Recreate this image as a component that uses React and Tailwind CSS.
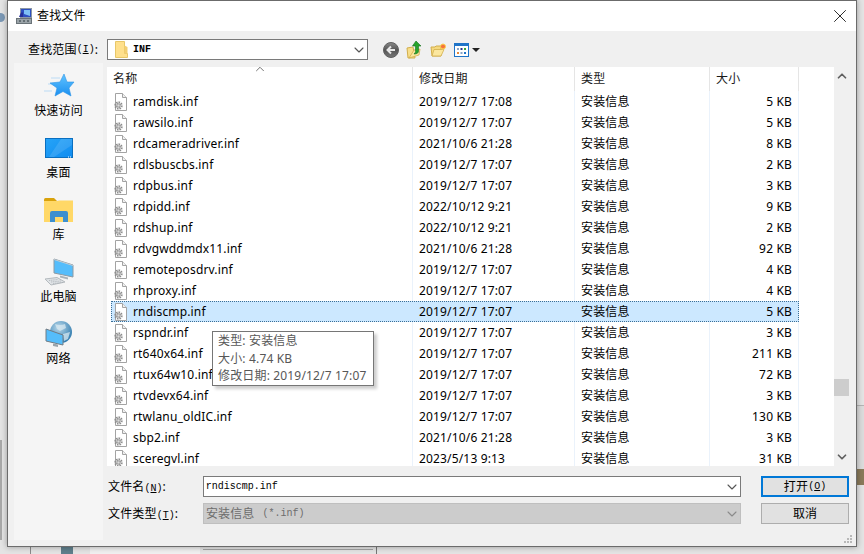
import { ChevronDown, ChevronUp, X } from "lucide-react";

const files = [
  ["ramdisk.inf", "2019/12/7 17:08", "5 KB"],
  ["rawsilo.inf", "2019/12/7 17:07", "5 KB"],
  ["rdcameradriver.inf", "2021/10/6 21:28", "8 KB"],
  ["rdlsbuscbs.inf", "2019/12/7 17:07", "2 KB"],
  ["rdpbus.inf", "2019/12/7 17:07", "3 KB"],
  ["rdpidd.inf", "2022/10/12 9:21", "9 KB"],
  ["rdshup.inf", "2022/10/12 9:21", "2 KB"],
  ["rdvgwddmdx11.inf", "2021/10/6 21:28", "92 KB"],
  ["remoteposdrv.inf", "2019/12/7 17:07", "4 KB"],
  ["rhproxy.inf", "2019/12/7 17:07", "4 KB"],
  ["rndiscmp.inf", "2019/12/7 17:07", "5 KB"],
  ["rspndr.inf", "2019/12/7 17:07", "3 KB"],
  ["rt640x64.inf", "2019/12/7 17:07", "211 KB"],
  ["rtux64w10.inf", "2019/12/7 17:07", "72 KB"],
  ["rtvdevx64.inf", "2019/12/7 17:07", "3 KB"],
  ["rtwlanu_oldIC.inf", "2019/12/7 17:07", "130 KB"],
  ["sbp2.inf", "2021/10/6 21:28", "3 KB"],
  ["sceregvl.inf", "2023/5/13 9:13", "31 KB"],
];

function FileIcon() {
  return (
    <svg width="14" height="18" viewBox="0 0 14 18" className="shrink-0">
      <path d="M2.5 .5H9.5L13.5 4.5V17.5H2.5Z" fill="#fff" stroke="#a3a3a3" />
      <path d="M9.5 .5V4.5H13.5" fill="#f0f0f0" stroke="#a3a3a3" />
      <circle cx="5.5" cy="12.5" r="3" fill="none" stroke="#8c8c8c" strokeWidth="2.4" strokeDasharray="1.4 .9" />
      <circle cx="5.5" cy="12.5" r="1.5" fill="#dcdcdc" stroke="#8c8c8c" strokeWidth=".8" />
    </svg>
  );
}

function FolderIcon() {
  return (
    <svg width="13" height="17" viewBox="0 0 13 17">
      <path d="M.5 .5H9.5V12.5H12.5V16.5H.5Z" fill="#ffe08c" stroke="#e8c768" />
      <path d="M9.5 4.5L12.5 6V12.5H9.5Z" fill="#f3cf72" />
    </svg>
  );
}

function StarIcon() {
  return (
    <svg width="32" height="26" viewBox="0 0 32 26">
      <defs>
        <linearGradient id="starFill" x1="0" y1="0" x2="0" y2="1">
          <stop offset="0" stopColor="#62c4ff" />
          <stop offset="1" stopColor="#1a8ff0" />
        </linearGradient>
      </defs>
      <path d="M8 5H17M5 11H12M1 18H9" stroke="#bcdcf5" strokeWidth="1.2" />
      <path d="M21 1L24 9L31 9L26 15L28 23L20 18.500L12 23L14 15L7 10L17 9Z" fill="url(#starFill)" stroke="#2a93e8" strokeWidth=".6" />
    </svg>
  );
}

function DesktopIcon() {
  return (
    <svg width="28" height="20" viewBox="0 0 28 20">
      <defs>
        <linearGradient id="deskFill" x1="0" y1="0" x2="1" y2="1">
          <stop offset="0" stopColor="#26a4f8" />
          <stop offset="1" stopColor="#0f8cf0" />
        </linearGradient>
      </defs>
      <rect x=".5" y=".5" width="27" height="19" fill="url(#deskFill)" stroke="#0a6fc0" />
      <path d="M16 1H27V7L9 19H4Z" fill="#fff" fillOpacity=".12" />
      <path d="M23 19H27" stroke="#fff" strokeDasharray="1 1" />
    </svg>
  );
}

function LibraryIcon() {
  return (
    <svg width="29" height="25" viewBox="0 0 29 25">
      <path d="M0 1.500Q0 0 1.500 0H10L13 3H0Z" fill="#d9a20c" />
      <path d="M0 3H13L15 2.500H29V24H0Z" fill="#ffd867" />
      <path d="M6 24V15Q6 13 8 13H22Q24 13 24 15V24H19V19H11V24Z" fill="#3c8fcf" />
    </svg>
  );
}

function ComputerIcon() {
  return (
    <svg width="32" height="28" viewBox="0 0 32 28">
      <path d="M11 1L30 7V19L11 15Z" fill="#55bdfb" stroke="#8e9aa3" />
      <path d="M11 1L30 7L30 8L11 2Z" fill="#c4ced4" />
      <path d="M17 17.500L25 19.500V21.500L17 19.500Z" fill="#aab3b9" />
      <path d="M2 21L14 19.500L22 24L8 27Z" fill="#dfe3e6" stroke="#b4babe" />
      <path d="M6 22.500L15 21.500M8 24L18 23M10 25.500L20 24.500" stroke="#a9afb4" strokeWidth=".7" strokeDasharray="1.200 .6" />
    </svg>
  );
}

function NetworkIcon() {
  return (
    <svg width="28" height="27" viewBox="0 0 28 27">
      <defs>
        <radialGradient id="globeFill" cx=".4" cy=".3" r=".8">
          <stop offset="0" stopColor="#b8d8ea" />
          <stop offset="1" stopColor="#1f6fa6" />
        </radialGradient>
      </defs>
      <circle cx="16" cy="11" r="11" fill="url(#globeFill)" />
      <path d="M10 3Q15 5 20 3L21 7L15 10L12 8ZM18 13L25 11L23 18L19 20Z" fill="#d8e8f0" fillOpacity=".75" />
      <path d="M1 8L18 14V24L1 20Z" fill="#55bdfb" stroke="#707c85" />
      <path d="M8 22.500L13 23.500V26L8 25Z" fill="#9aa4ab" />
    </svg>
  );
}

function BackIcon() {
  return (
    <svg width="16" height="16" viewBox="0 0 16 16">
      <defs>
        <linearGradient id="backFill" x1="0" y1="0" x2="0" y2="1">
          <stop offset="0" stopColor="#8a8a8a" />
          <stop offset=".5" stopColor="#555" />
          <stop offset="1" stopColor="#777" />
        </linearGradient>
      </defs>
      <circle cx="8" cy="8" r="7.500" fill="url(#backFill)" stroke="#5f5f5f" />
      <path d="M12 8H5M8 4.500L4.500 8L8 11.500" fill="none" stroke="#e8e8e8" strokeWidth="2" />
    </svg>
  );
}

function UpFolderIcon() {
  return (
    <svg width="16" height="18" viewBox="0 0 16 18">
      <path d="M1 7L7 6L9 17L2 17Z" fill="#f8df8a" stroke="#d2ae4c" />
      <path d="M3 17L13 14L14 8L8 9Z" fill="#fbe79f" stroke="#d2ae4c" strokeWidth=".8" />
      <path d="M10 0L15 5H12.500V10Q12.500 13 8 13Q10.500 11 9.500 9V5H6.500Z" fill="#27a32c" stroke="#14701c" strokeWidth=".6" />
    </svg>
  );
}

function NewFolderIcon() {
  return (
    <svg width="16" height="14" viewBox="0 0 16 14">
      <path d="M1 4H5L6 3H11V13H2Z" fill="#f5d97f" stroke="#d2ae4c" />
      <path d="M2 13L4 6.500H14L11 13Z" fill="#fbe79f" stroke="#d2ae4c" strokeWidth=".8" />
      <circle cx="13" cy="3.500" r="2.500" fill="#f6743a" stroke="#fbd24e" />
    </svg>
  );
}

function ViewIcon() {
  return (
    <svg width="15" height="14" viewBox="0 0 15 14">
      <rect x=".5" y=".5" width="14" height="13" fill="#fff" stroke="#1f74c8" />
      <rect x="1" y="1" width="13" height="2" fill="#1f74c8" />
      <rect x="3" y="5" width="2" height="2" fill="#8aa5c8" />
      <rect x="6.500" y="5" width="2" height="2" fill="#27348b" />
      <rect x="10" y="5" width="2" height="2" fill="#3aa53a" />
      <rect x="3" y="9" width="2" height="2" fill="#e58a3a" />
      <rect x="6.500" y="9" width="2" height="2" fill="#8aa5c8" />
      <rect x="10" y="9" width="2" height="2" fill="#1f74c8" />
    </svg>
  );
}

function TitleIcon() {
  return (
    <svg width="16" height="16" viewBox="0 0 16 16">
      <rect x="4.500" y=".5" width="11" height="9" fill="#2d4fc0" stroke="#8b97a6" />
      <path d="M8 2H14V8L8 6Z" fill="#7fc0f5" />
      <rect x=".5" y="10.500" width="15" height="5" fill="#9aa3a8" stroke="#6a7378" />
      <path d="M3 13H5M7 13H9M11 13H13" stroke="#2f3a40" />
      <path d="M3 9L5 4.500H7V9Z" fill="#25309a" />
    </svg>
  );
}

function Hotkey({ k }) {
  return (
    <span className="font-['Liberation_Mono',monospace] text-[10px] tracking-normal">
      (<span className="underline">{k}</span>)
    </span>
  );
}

function SideItem({ icon, label }) {
  return (
    <div className="flex h-[62px] flex-col items-center">
      <div className="flex h-[30px] items-center justify-center">{icon}</div>
      <div className="mt-px h-[18px] text-[12px] leading-[18px] text-black">{label}</div>
    </div>
  );
}

function FileRow({ name, date, size, selected }) {
  const line = selected ? "border-transparent" : "border-[#eaf2fb]";
  return (
    <div
      className={`ml-[4px] flex h-[21px] w-[688px] items-center text-[12px] text-black ${
        selected ? "bg-[#cce8ff] outline-1 -outline-offset-1 outline-dotted outline-[#3c6f96]" : ""
      }`}
    >
      <div className={`flex h-full w-[302px] items-center gap-[4px] border-r pl-[2px] ${line}`}>
        <FileIcon />
        <span className="ml-[2px]">{name}</span>
      </div>
      <div className={`flex h-full w-[162px] items-center border-r pl-[6px] ${line}`}>{date}</div>
      <div className={`flex h-full w-[135px] items-center border-r pl-[6px] ${line}`}>安装信息</div>
      <div className={`flex h-full w-[89px] items-center justify-end border-r pr-[6px] ${line}`}>{size}</div>
    </div>
  );
}

export default function App() {
  return (
    <div className="relative h-[554px] w-[864px] overflow-hidden bg-[#e4e4e4] font-['Noto_Sans','Noto_Sans_CJK_SC',sans-serif] tracking-[0.01em]">
      {/* what is behind the dialog */}
      <div className="absolute top-[405px] left-[857px] h-[64px] w-[7px] border-t border-[#b5b5b5] bg-[#dcdcdc]" />
      <div className="absolute top-[469px] left-[857px] h-[16px] w-[7px] bg-[#8a7a5a]" />
      <div className="absolute top-[547px] left-[30px] h-[7px] w-px bg-[#8a8a8a]" />
      <div className="absolute top-[547px] left-[61px] h-[7px] w-[12px] bg-[#5f7f8c]" />
      <div className="absolute top-[547px] left-[90px] h-[7px] w-[110px] bg-[#f0f0f0]" />
      <div className="absolute top-[549px] left-[203px] h-px w-[170px] bg-[#a5a5a5]" />
      <div className="absolute top-[547px] left-[376px] h-[7px] w-px bg-[#777777]" />
      <div className="absolute top-[13px] left-0 h-[9px] w-[5px] rounded-r-full bg-[#7b98b5]" />
      <div className="absolute top-[440px] left-0 h-[100px] w-[2px] bg-[#a8a8a8]" />

      {/* dialog */}
      <div className="relative ml-[7px] flex h-[547px] w-[850px] flex-col border border-[#6b6b6b] bg-[#f0f0f0] shadow-[0_0_6px_rgba(0,0,0,0.35)]">
        <div className="flex h-[30px] shrink-0 items-center bg-white pl-[8px] text-[12px] text-black">
          <TitleIcon />
          <span className="ml-[5px]">查找文件</span>
          <X size={22} strokeWidth={0.9} className="mr-[5px] ml-auto text-black" />
        </div>

        <div className="flex h-[32px] shrink-0 items-start pt-[8px]">
          <div className="flex h-[21px] w-[99px] items-center pl-[20px] text-[12px] whitespace-nowrap text-black">
            查找范围<Hotkey k="I" />:
          </div>
          <div className="flex h-[21px] w-[261px] items-center border border-[#7a7a7a] bg-white pl-[7px]">
            <FolderIcon />
            <span className="ml-[5px] font-['Liberation_Mono',monospace] text-[10px] font-bold tracking-normal text-black">INF</span>
            <ChevronDown size={16} strokeWidth={1.6} className="ml-auto text-[#555]" />
          </div>
          <div className="ml-[15px] flex h-[21px] items-center">
            <BackIcon />
            <div className="ml-[7px]"><UpFolderIcon /></div>
            <div className="ml-[8px]"><NewFolderIcon /></div>
            <div className="ml-[8px]"><ViewIcon /></div>
            <div className="ml-[3px] h-0 w-0 border-x-[4px] border-t-[4px] border-x-transparent border-t-[#222]" />
          </div>
        </div>

        <div className="flex">
          <div className="ml-[6px] h-[477px] w-[89px] shrink-0 bg-[#f5f5f5] pt-[8px]">
            <SideItem icon={<StarIcon />} label="快速访问" />
            <SideItem icon={<DesktopIcon />} label="桌面" />
            <SideItem icon={<LibraryIcon />} label="库" />
            <SideItem icon={<ComputerIcon />} label="此电脑" />
            <SideItem icon={<NetworkIcon />} label="网络" />
          </div>

          <div className="ml-[4px] w-[742px] pt-[4px]">
            <div className="flex h-[399px]">
              <div className="relative w-[727px] overflow-hidden bg-white">
                <div className="flex h-[24px] text-[12px] text-[#1a1a1a]">
                  <div className="flex w-[306px] items-center border-r border-[#e5e5e5] pl-[6px]">名称</div>
                  <div className="flex w-[162px] items-center border-r border-[#e5e5e5] pl-[6px]">修改日期</div>
                  <div className="flex w-[135px] items-center border-r border-[#e5e5e5] pl-[6px]">类型</div>
                  <div className="flex w-[89px] items-center border-r border-[#e5e5e5] pl-[6px]">大小</div>
                </div>
                <ChevronUp size={14} strokeWidth={1.4} className="absolute top-[-5px] left-[146px] text-[#555]" />
                {files.map((f, i) => (
                  <FileRow key={f[0]} name={f[0]} date={f[1]} size={f[2]} selected={i === 10} />
                ))}
              </div>
              <div className="flex w-[15px] flex-col items-center bg-[#f0f0f0]">
                <ChevronUp size={14} strokeWidth={3} className="mt-[2px] text-[#606060]" />
                <div className="mt-[296px] h-[17px] w-[15px] shrink-0 bg-[#cdcdcd]" />
                <ChevronDown size={14} strokeWidth={3} className="mt-[54px] text-[#606060]" />
              </div>
            </div>

            <div className="mt-[10px] flex h-[21px] items-center text-[12px] text-black">
              <div className="w-[96px] pl-[1px]">文件名<Hotkey k="N" />:</div>
              <div className="flex h-[21px] w-[539px] items-center border border-[#7a7a7a] bg-white pl-[2px] font-['Liberation_Mono',monospace] text-[10px] tracking-normal text-black">
                rndiscmp.inf
                <ChevronDown size={16} strokeWidth={1.6} className="ml-auto text-[#555]" />
              </div>
              <div className="ml-[20px] flex h-[21px] w-[88px] items-center justify-center border-2 border-[#0078d7] bg-[#e1e1e1]">
                打开<Hotkey k="O" />
              </div>
            </div>

            <div className="mt-[6px] flex h-[21px] items-center text-[12px] text-black">
              <div className="w-[96px] pl-[1px]">文件类型<Hotkey k="T" />:</div>
              <div className="flex h-[21px] w-[539px] items-center border border-[#bfbfbf] bg-[#cccccc] pl-[2px] text-[#6d6d6d]">
                安装信息<span className="ml-[8px] font-['Liberation_Mono',monospace] text-[10px] tracking-normal">(*.inf)</span>
                <ChevronDown size={16} strokeWidth={1.6} className="ml-auto text-[#8a8a8a]" />
              </div>
              <div className="ml-[20px] flex h-[21px] w-[88px] items-center justify-center border border-[#adadad] bg-[#e1e1e1]">
                取消
              </div>
            </div>
          </div>
        </div>

        {/* resize grip */}
        <svg width="8" height="9" viewBox="0 0 8 9" className="absolute right-[4px] bottom-[2px]">
          <path d="M6 0h2v2H6zM3 3h2v2H3zM6 3h2v2H6zM0 6h2v2H0zM3 6h2v2H3zM6 6h2v2H6z" fill="#b8b8b8" />
        </svg>

        {/* tooltip */}
        <div className="absolute top-[330px] left-[204px] flex h-[55px] w-[162px] flex-col justify-center border border-[#767676] bg-white pl-[5px] text-[12px] leading-[17.500px] whitespace-nowrap text-[#575757] shadow-[3px_3px_3px_rgba(0,0,0,0.2)]">
          <div>类型: 安装信息</div>
          <div>大小: 4.74 KB</div>
          <div>修改日期: 2019/12/7 17:07</div>
        </div>
      </div>
    </div>
  );
}
